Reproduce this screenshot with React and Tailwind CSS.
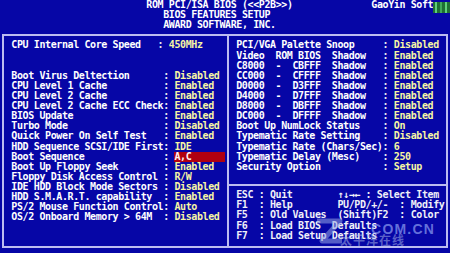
import React from "react";

const leftRows = [
  { label: "CPU Internal Core Speed", value: "450MHz", pad: 26 },
  null,
  null,
  { label: "Boot Virus Deltection", value: "Disabled" },
  { label: "CPU Level 1 Cache", value: "Enabled" },
  { label: "CPU Level 2 Cache", value: "Enabled" },
  { label: "CPU Level 2 Cache ECC Check", value: "Enabled" },
  { label: "BIOS Update", value: "Enabled" },
  { label: "Turbo Mode", value: "Disabled" },
  { label: "Quick Power On Self Test", value: "Enabled" },
  { label: "HDD Sequence SCSI/IDE First", value: "IDE" },
  { label: "Boot Sequence", value: "A,C", hl: true },
  { label: "Boot Up Floppy Seek", value: "Enabled" },
  { label: "Floppy Disk Access Control", value: "R/W" },
  { label: "IDE HDD Block Mode Sectors", value: "Disabled" },
  { label: "HDD S.M.A.R.T. capability", value: "Enabled" },
  { label: "PS/2 Mouse Function Control", value: "Auto" },
  { label: "OS/2 Onboard Memory > 64M", value: "Disabled" },
];

const rightRows = [
  { label: "PCI/VGA Palette Snoop", value: "Disabled" },
  { label: "Video  ROM BIOS  Shadow", value: "Enabled" },
  { label: "C8000  -  CBFFF  Shadow", value: "Enabled" },
  { label: "CC000  -  CFFFF  Shadow", value: "Enabled" },
  { label: "D0000  -  D3FFF  Shadow", value: "Enabled" },
  { label: "D4000  -  D7FFF  Shadow", value: "Enabled" },
  { label: "D8000  -  DBFFF  Shadow", value: "Enabled" },
  { label: "DC000  -  DFFFF  Shadow", value: "Enabled" },
  { label: "Boot Up NumLock Status", value: "On" },
  { label: "Typematic Rate Setting", value: "Disabled" },
  { label: "Typematic Rate (Chars/Sec)", value: "6" },
  { label: "Typematic Delay (Mesc)", value: "250" },
  { label: "Security Option", value: "Setup" },
];

const helpRows = [
  ["ESC : Quit", "\u2191\u2193\u2192\u2190 : Select Item"],
  ["F1  : Help", "PU/PD/+/-  : Modify"],
  ["F5  : Old Values", "(Shift)F2  : Color"],
  ["F6  : Load BIOS  Defaults", ""],
  ["F7  : Load Setup Defaults", ""],
];

function Row({ children }) {
  return <div className="h-[10.12px] leading-[10.12px] whitespace-pre">{children}</div>;
}

function Item({ row, pad }) {
  if (!row) return <Row> </Row>;
  const p = row.pad || pad;
  return (
    <Row>
      <span className="text-white">{row.label.padEnd(p)}</span>
      <span className="text-[#e8e8f0]">: </span>
      {row.hl ? (
        <span className="inline-block w-[50.6px] h-[10.12px] bg-[#b00010] text-[#fff0f0]">{row.value}</span>
      ) : (
        <span className="text-[#f6f6a4]">{row.value}</span>
      )}
    </Row>
  );
}

export default function App() {
  return (
    <div className="relative w-[450px] h-[253px] overflow-hidden bg-[#0606a6] font-['DejaVu_Sans_Mono','Liberation_Mono',monospace] text-[10px] font-bold tracking-[-0.395px] text-white">
      <div>
        <Row>
          {"                          ROM PCI/ISA BIOS (<<P2B>>)              GaoYin Soft"}
          <svg className="inline-block align-top mt-[2px]" width="17" height="11" viewBox="0 0 17 11">
            <rect x="0" y="0" width="17" height="11" fill="#1f6f34" />
            <rect x="2" y="0" width="2" height="11" fill="#5fd07a" />
            <rect x="7" y="0" width="2" height="11" fill="#3fa85a" />
            <rect x="12" y="0" width="2" height="11" fill="#5fd07a" />
          </svg>
        </Row>
        <Row>{"                             BIOS FEATURES SETUP"}</Row>
        <Row>{"                             AWARD SOFTWARE, INC."}</Row>
      </div>

      <div className="mt-[4px] ml-[2px] w-[446px] h-[214px] border-2 border-[#bcbcf0] flex">
        <div className="w-[222.8px] pt-[4.12px] pl-[7.25px]">
          {leftRows.map((r, i) => (
            <Item key={i} row={r} pad={27} />
          ))}
        </div>
        <div className="flex-1 border-l-2 border-[#bcbcf0] flex flex-col">
          <div className="h-[150px] border-b-2 border-[#bcbcf0] pt-[4.12px] pl-[7.45px]">
            {rightRows.map((r, i) => (
              <Item key={i} row={r} pad={26} />
            ))}
          </div>
          <div className="pt-[3.92px] pl-[7.45px] text-[#f0f0f8]">
            {helpRows.map((h, i) => (
              <Row key={i}>{h[0].padEnd(18) + h[1]}</Row>
            ))}
          </div>
        </div>
      </div>

      <div className="absolute left-[312px] top-[215px] pointer-events-none">
        <svg width="34" height="32" viewBox="0 0 34 32">
          <path d="M5 6 H28 L10 26 H30" fill="none" stroke="rgba(150,165,225,0.55)" strokeWidth="5" strokeLinejoin="round" />
        </svg>
      </div>
      <div className="absolute left-[366px] top-[221px] pointer-events-none font-['Liberation_Sans',Arial,sans-serif] text-[14px] font-bold tracking-[1.2px] leading-[16px] text-[rgba(165,185,255,0.6)]">
        .COM.CN
      </div>
      <div className="absolute left-[340px] top-[233px] pointer-events-none font-['Noto_Sans_CJK_SC',sans-serif] text-[12px] font-bold tracking-[1px] leading-[14px] text-[rgba(175,188,235,0.5)]">
        太平洋在线
      </div>
    </div>
  );
}
